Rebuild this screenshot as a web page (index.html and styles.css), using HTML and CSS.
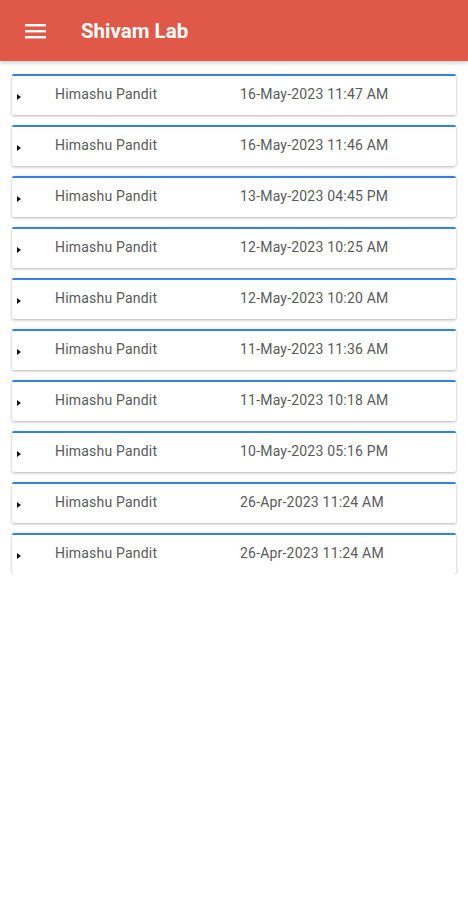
FILE: index.html
```html
<!DOCTYPE html>
<html>
<head>
<meta charset="utf-8">
<link rel="stylesheet" href="styles.css">
</head>
<body>
<header class="appbar">
  <svg class="menu" width="22" height="16" viewBox="0 0 22 16"><rect x="0" y="1" width="21" height="2.4" fill="#fff"/><rect x="0" y="7" width="21" height="2.4" fill="#fff"/><rect x="0" y="13" width="21" height="2.4" fill="#fff"/></svg>
  <h1 class="title">Shivam Lab</h1>
</header>
<main class="list">
  <div class="card"><span class="arrow"></span><span class="name">Himashu Pandit</span><span class="date">16-May-2023 11:47 AM</span></div>
  <div class="card"><span class="arrow"></span><span class="name">Himashu Pandit</span><span class="date">16-May-2023 11:46 AM</span></div>
  <div class="card"><span class="arrow"></span><span class="name">Himashu Pandit</span><span class="date">13-May-2023 04:45 PM</span></div>
  <div class="card"><span class="arrow"></span><span class="name">Himashu Pandit</span><span class="date">12-May-2023 10:25 AM</span></div>
  <div class="card"><span class="arrow"></span><span class="name">Himashu Pandit</span><span class="date">12-May-2023 10:20 AM</span></div>
  <div class="card"><span class="arrow"></span><span class="name">Himashu Pandit</span><span class="date">11-May-2023 11:36 AM</span></div>
  <div class="card"><span class="arrow"></span><span class="name">Himashu Pandit</span><span class="date">11-May-2023 10:18 AM</span></div>
  <div class="card"><span class="arrow"></span><span class="name">Himashu Pandit</span><span class="date">10-May-2023 05:16 PM</span></div>
  <div class="card"><span class="arrow"></span><span class="name">Himashu Pandit</span><span class="date">26-Apr-2023 11:24 AM</span></div>
  <div class="card"><span class="arrow"></span><span class="name">Himashu Pandit</span><span class="date">26-Apr-2023 11:24 AM</span></div>
</main>
</body>
</html>
```
FILE: styles.css
```css
html, body {
  margin: 0;
  padding: 0;
  background: #fff;
  font-family: Roboto, "Liberation Sans", sans-serif;
}
.appbar {
  height: 61px;
  background: #e05847;
  display: flex;
  align-items: center;
  padding-left: 25px;
  box-shadow: 0 2px 4px rgba(0,0,0,0.2);
  box-sizing: border-box;
}
.menu {
  display: block;
  margin-top: 1px;
}
.title {
  margin: 0 0 0 34px;
  color: #fff;
  font-size: 20.5px;
  font-weight: 700;
  letter-spacing: 0;
}
.list {
  padding: 13px 12px 0;
  display: flex;
  flex-direction: column;
  gap: 10px;
}
.card {
  height: 41px;
  box-sizing: border-box;
  background: #fff;
  border-top: 2px solid #3580e8;
  border-radius: 2px;
  box-shadow: 0 1px 3px rgba(0,0,0,0.3);
  display: grid;
  grid-template-columns: 43px 185px 1fr;
  align-items: center;
  font-size: 14px;
  letter-spacing: 0.2px;
  color: #5a5a5a;
}
.arrow {
  width: 0;
  height: 0;
  margin-left: 5px;
  margin-top: 2px;
  border-left: 4px solid #111;
  border-top: 3px solid transparent;
  border-bottom: 3px solid transparent;
}
.name, .date {
  margin-top: -4px;
}
```
